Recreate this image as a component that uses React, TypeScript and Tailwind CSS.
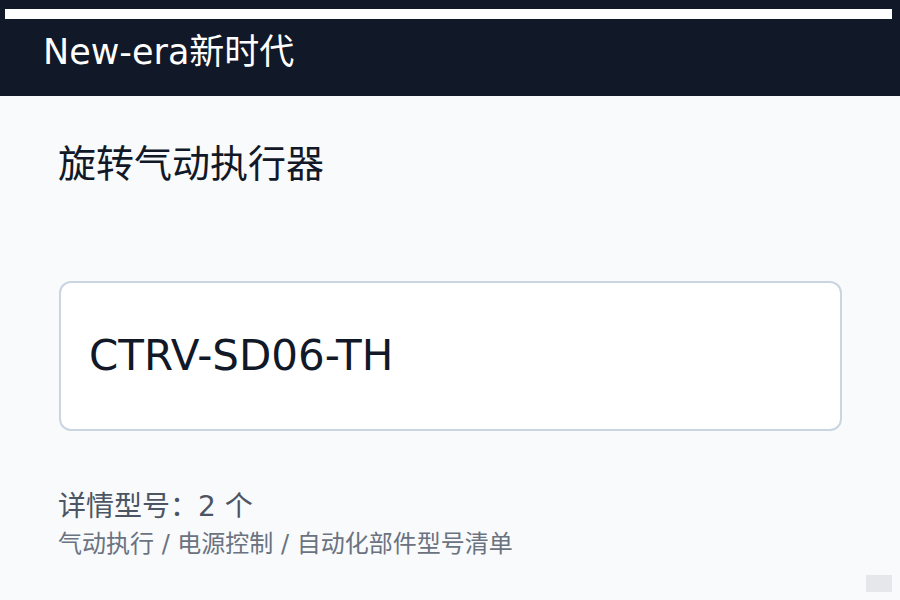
import React from "react";

export default function App() {
  return (
    <div
      className="relative w-[900px] h-[600px] overflow-hidden bg-[#f8fafc]"
      style={{ fontFamily: '"DejaVu Sans", "Noto Sans CJK SC", sans-serif' }}
    >
      <header className="h-[96px] bg-[#111827] pt-[9px] px-[5px] pr-[8px]">
        <div className="h-[10px] bg-white" />
        <div className="pl-[38px] pt-[8px] text-[35px] leading-[50px] text-white">New-era新时代</div>
      </header>
      <main className="px-[58px]">
        <h1 className="pt-[40px] text-[38px] leading-[56px] text-[#111827]">旋转气动执行器</h1>
        <div className="mt-[89px] ml-[1px] h-[150px] rounded-[12px] border-2 border-[#cbd5e1] bg-white flex items-center px-[28px]">
          <span className="text-[42px] leading-[56px] text-[#111827]">CTRV-SD06-TH</span>
        </div>
        <div className="mt-[58px] text-[28px] leading-[36px] text-[#4b5563]">详情型号：2 个</div>
        <div className="mt-[2px] text-[24px] leading-[34px] text-[#6b7280]">气动执行 / 电源控制 / 自动化部件型号清单</div>
      </main>
      <div className="absolute left-[866px] top-[575px] w-[26px] h-[17px] bg-[#e5e7eb]" />
    </div>
  );
}
